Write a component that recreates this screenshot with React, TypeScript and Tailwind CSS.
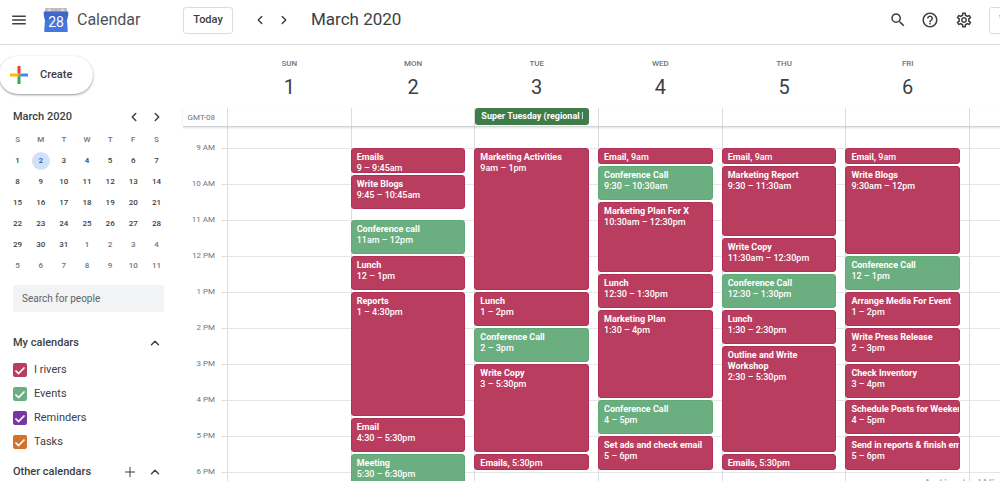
import {
  ChevronLeft,
  ChevronRight,
  ChevronUp,
  Plus,
} from "lucide-react";
import {
  MdHelpOutline,
  MdMenu,
  MdOutlineSettings,
  MdSearch,
} from "react-icons/md";

type Tone = "rose" | "green";

interface CalEvent {
  title: string;
  time: string;
  start: number;
  end: number;
  tone?: Tone;
  wrap?: boolean;
}

interface Day {
  name: string;
  date: number;
  allDay?: string;
  events: CalEvent[];
}

const FIRST_HOUR = 9;

const toneClass: Record<Tone, string> = {
  rose: "bg-[#b93d5e] border-[#b23057]",
  green: "bg-[#6bae7f] border-[#62a978]",
};

const days: Day[] = [
  { name: "SUN", date: 1, events: [] },
  {
    name: "MON",
    date: 2,
    events: [
      { title: "Emails", time: "9 – 9:45am", start: 9, end: 9.75 },
      { title: "Write Blogs", time: "9:45 – 10:45am", start: 9.75, end: 10.75 },
      { title: "Conference call", time: "11am – 12pm", start: 11, end: 12, tone: "green" },
      { title: "Lunch", time: "12 – 1pm", start: 12, end: 13 },
      { title: "Reports", time: "1 – 4:30pm", start: 13, end: 16.5 },
      { title: "Email", time: "4:30 – 5:30pm", start: 16.5, end: 17.5 },
      { title: "Meeting", time: "5:30 – 6:30pm", start: 17.5, end: 18.5, tone: "green" },
    ],
  },
  {
    name: "TUE",
    date: 3,
    allDay: "Super Tuesday (regional holiday)",
    events: [
      { title: "Marketing Activities", time: "9am – 1pm", start: 9, end: 13 },
      { title: "Lunch", time: "1 – 2pm", start: 13, end: 14 },
      { title: "Conference Call", time: "2 – 3pm", start: 14, end: 15, tone: "green" },
      { title: "Write Copy", time: "3 – 5:30pm", start: 15, end: 17.5 },
      { title: "Emails", time: "5:30pm", start: 17.5, end: 18 },
    ],
  },
  {
    name: "WED",
    date: 4,
    events: [
      { title: "Email", time: "9am", start: 9, end: 9.5 },
      { title: "Conference Call", time: "9:30 – 10:30am", start: 9.5, end: 10.5, tone: "green" },
      { title: "Marketing Plan For X", time: "10:30am – 12:30pm", start: 10.5, end: 12.5 },
      { title: "Lunch", time: "12:30 – 1:30pm", start: 12.5, end: 13.5 },
      { title: "Marketing Plan", time: "1:30 – 4pm", start: 13.5, end: 16 },
      { title: "Conference Call", time: "4 – 5pm", start: 16, end: 17, tone: "green" },
      { title: "Set ads and check email", time: "5 – 6pm", start: 17, end: 18 },
    ],
  },
  {
    name: "THU",
    date: 5,
    events: [
      { title: "Email", time: "9am", start: 9, end: 9.5 },
      { title: "Marketing Report", time: "9:30 – 11:30am", start: 9.5, end: 11.5 },
      { title: "Write Copy", time: "11:30am – 12:30pm", start: 11.5, end: 12.5 },
      { title: "Conference Call", time: "12:30 – 1:30pm", start: 12.5, end: 13.5, tone: "green" },
      { title: "Lunch", time: "1:30 – 2:30pm", start: 13.5, end: 14.5 },
      { title: "Outline and Write Workshop", time: "2:30 – 5:30pm", start: 14.5, end: 17.5, wrap: true },
      { title: "Emails", time: "5:30pm", start: 17.5, end: 18 },
    ],
  },
  {
    name: "FRI",
    date: 6,
    events: [
      { title: "Email", time: "9am", start: 9, end: 9.5 },
      { title: "Write Blogs", time: "9:30am – 12pm", start: 9.5, end: 12 },
      { title: "Conference Call", time: "12 – 1pm", start: 12, end: 13, tone: "green" },
      { title: "Arrange Media For Event", time: "1 – 2pm", start: 13, end: 14 },
      { title: "Write Press Release", time: "2 – 3pm", start: 14, end: 15 },
      { title: "Check Inventory", time: "3 – 4pm", start: 15, end: 16 },
      { title: "Schedule Posts for Weekend", time: "4 – 5pm", start: 16, end: 17 },
      { title: "Send in reports & finish emails", time: "5 – 6pm", start: 17, end: 18 },
    ],
  },
];

const hours = ["9 AM", "10 AM", "11 AM", "12 PM", "1 PM", "2 PM", "3 PM", "4 PM", "5 PM", "6 PM"];

// Six full weeks starting on Sunday, March 1st
const monthDays = Array.from({ length: 42 }, (_, i) => (i < 31 ? i + 1 : i - 30));

const calendars = [
  { name: "I rivers", color: "bg-[#b93d5e]" },
  { name: "Events", color: "bg-[#6bae7f]" },
  { name: "Reminders", color: "bg-[#7a35a0]" },
  { name: "Tasks", color: "bg-[#d2722b]" },
];

function Logo() {
  return (
    <svg viewBox="0 0 26 26" className="h-[26px] w-[26px]" aria-hidden="true">
      <path d="M3 1h20a1 1 0 0 1 1 1v4H2V2a1 1 0 0 1 1-1z" fill="#bdbdbd" />
      <circle cx="6.500" cy="3" r="1" fill="#f5f5f5" />
      <circle cx="19.500" cy="3" r="1" fill="#f5f5f5" />
      <path d="M1.500 4.500h23a.7.7 0 0 1 .7.7v3L24 13.500H2L.8 8.200v-3a.7.7 0 0 1 .7-.7z" fill="#3d67c9" />
      <path d="M2 13h22l.8 11a1 1 0 0 1-1 1H2.200a1 1 0 0 1-1-1z" fill="#4478df" />
      <text
        x="13"
        y="20"
        textAnchor="middle"
        fontSize="14"
        fill="#fff"
        fontFamily="Roboto, sans-serif"
      >
        28
      </text>
    </svg>
  );
}

function Header() {
  return (
    <header className="flex h-[45px] shrink-0 items-center overflow-hidden border-b border-[#dadce0] pb-1 pl-[10px] text-[#3c4043]">
      <button aria-label="Main menu">
        <MdMenu className="h-[18px] w-[18px]" />
      </button>
      <div className="ml-[15px] flex w-[140px] shrink-0 items-center gap-2">
        <Logo />
        <span className="text-[16px] text-[#4d5156]">Calendar</span>
      </div>
      <button className="h-[27px] w-[50px] shrink-0 rounded-[3px] border border-[#dadce0] text-[11px] font-medium">
        Today
      </button>
      <button aria-label="Previous week" className="ml-5">
        <ChevronLeft className="h-3.5 w-3.5" strokeWidth={2.5} />
      </button>
      <button aria-label="Next week" className="ml-2.5">
        <ChevronRight className="h-3.5 w-3.5" strokeWidth={2.5} />
      </button>
      <h1 className="ml-5 flex-1 text-[17px]">March 2020</h1>
      <div className="flex shrink-0 items-center gap-3.5">
        <button aria-label="Search">
          <MdSearch className="h-[18px] w-[18px]" />
        </button>
        <button aria-label="Support">
          <MdHelpOutline className="h-[18px] w-[18px]" />
        </button>
        <button aria-label="Settings" className="ml-0.5">
          <MdOutlineSettings className="h-[18px] w-[18px]" />
        </button>
      </div>
      <button className="-mr-[39px] ml-4 h-[27px] w-[50px] shrink-0 rounded-[3px] border border-[#dadce0] text-[12px] font-medium">
        Week
      </button>
    </header>
  );
}

function MiniCalendar() {
  return (
    <section>
      <div className="mt-[15px] flex h-4 items-center pl-[13px] pr-[19px]">
        <h2 className="flex-1 text-[11px] font-medium">March 2020</h2>
        <button aria-label="Previous month">
          <ChevronLeft className="h-3.5 w-3.5" strokeWidth={2.5} />
        </button>
        <button aria-label="Next month" className="ml-[9px]">
          <ChevronRight className="h-3.5 w-3.5" strokeWidth={2.5} />
        </button>
      </div>
      <table className="mt-1 ml-1.5 w-[162px] table-fixed text-center text-[8px]">
        <thead>
          <tr className="h-[21px] text-[#70757a]">
            {["S", "M", "T", "W", "T", "F", "S"].map((d, i) => (
              <th key={i} className="p-0 font-medium">
                {d}
              </th>
            ))}
          </tr>
        </thead>
        <tbody>
          {[0, 1, 2, 3, 4, 5].map((week) => (
            <tr key={week} className="h-[21px]">
              {monthDays.slice(week * 7, week * 7 + 7).map((d, i) => {
                const index = week * 7 + i;
                return (
                  <td
                    key={index}
                    className={index > 30 ? "p-0 font-medium text-[#70757a]" : "p-0 font-medium"}
                  >
                    {index === 1 ? (
                      <span className="mx-auto flex h-[18px] w-[18px] items-center justify-center rounded-full bg-[#d2e0f8] text-[#185abc]">
                        {d}
                      </span>
                    ) : (
                      d
                    )}
                  </td>
                );
              })}
            </tr>
          ))}
        </tbody>
      </table>
    </section>
  );
}

function Sidebar() {
  return (
    <aside className="w-[183px] shrink-0 pt-[11px] text-[#3c4043]">
      <button className="-ml-px flex h-[38px] w-[94px] items-center gap-3 rounded-full pl-[11px] text-[11px] font-medium shadow-[0_1px_2px_rgba(60,64,67,0.4),0_1px_3px_rgba(60,64,67,0.2)]">
        <svg viewBox="0 0 18 18" className="h-[18px] w-[18px]" aria-hidden="true">
          <path d="M7.500 0h3v10.500h-3z" fill="#ea4335" />
          <path d="M7.500 10.500h3V18h-3z" fill="#34a853" />
          <path d="M10.500 7.500H18v3h-7.500z" fill="#4285f4" />
          <path d="M0 7.500h10.500l-3 3H0z" fill="#fbbc04" />
        </svg>
        Create
      </button>
      <MiniCalendar />
      <input
        aria-label="Search for people"
        placeholder="Search for people"
        className="mt-[9px] ml-[13px] block h-[27px] w-[151px] rounded-[3px] bg-[#f1f3f4] px-[9px] text-[10px] placeholder:text-[#5f6368]"
      />
      <div className="mt-[23px] flex h-4 items-center pl-[13px] pr-[21px]">
        <h2 className="flex-1 text-[11px] font-medium">My calendars</h2>
        <button aria-label="Collapse my calendars">
          <ChevronUp className="h-3.5 w-3.5" strokeWidth={2.5} />
        </button>
      </div>
      <ul className="mt-[7px] pl-[13px]">
        {calendars.map((cal) => (
          <li key={cal.name} className="h-6">
            <label className="flex h-full items-center gap-[7px] text-[11px]">
              <span className="grid">
                <input
                  type="checkbox"
                  defaultChecked
                  className={`col-start-1 row-start-1 h-3.5 w-3.5 appearance-none rounded-[2px] ${cal.color}`}
                />
                <svg
                  viewBox="0 0 14 14"
                  className="pointer-events-none col-start-1 row-start-1 h-3.5 w-3.5"
                  aria-hidden="true"
                >
                  <path d="M2.500 7.500l3 3 6-6" fill="none" stroke="#fff" strokeWidth="1.600" />
                </svg>
              </span>
              {cal.name}
            </label>
          </li>
        ))}
      </ul>
      <div className="mt-[10px] flex h-4 items-center pl-[13px] pr-[21px]">
        <h2 className="flex-1 text-[11px] font-medium">Other calendars</h2>
        <button aria-label="Add other calendars" className="mr-2.5">
          <Plus className="h-4 w-4" strokeWidth={1.5} />
        </button>
        <button aria-label="Collapse other calendars">
          <ChevronUp className="h-3.5 w-3.5" strokeWidth={2.5} />
        </button>
      </div>
    </aside>
  );
}

function EventBlock({ event }: { event: CalEvent }) {
  const quarters = (event.end - event.start) * 4;
  const row = (event.start - FIRST_HOUR) * 4 + 1;
  const short = quarters <= 2;

  return (
    <div
      className={`mb-0.5 -ml-px mr-[9px] overflow-hidden rounded-[3px] border pl-[5px] pt-[3px] text-[9px] leading-[11px] font-medium text-white ${toneClass[event.tone ?? "rose"]}`}
      style={{ gridRow: `${row} / span ${quarters}` }}
    >
      {short ? (
        <p className="whitespace-nowrap">
          <span className="font-bold">{event.title},</span> {event.time}
        </p>
      ) : (
        <>
          <p className={event.wrap ? "font-bold" : "whitespace-nowrap font-bold"}>
            {event.title}
          </p>
          <p className="whitespace-nowrap">{event.time}</p>
        </>
      )}
    </div>
  );
}

function Week() {
  return (
    <main className="flex min-w-0 flex-1 flex-col">
      <div className="flex h-[63px] shrink-0">
        <div className="w-11 shrink-0" />
        <div className="grid flex-1 grid-cols-[repeat(6,4fr)_1fr] text-center">
          {days.map((day) => (
            <div key={day.name} className="border-l border-transparent pt-3">
              <p className="text-[8px] leading-[14px] font-medium text-[#70757a]">{day.name}</p>
              <p className="mt-[3px] text-[20px] leading-[26px] text-[#3c4043]">{day.date}</p>
            </div>
          ))}
        </div>
      </div>

      <div className="z-10 flex h-[19px] shrink-0 border-b border-[#d0d2d5] shadow-[0_1px_2px_rgba(0,0,0,0.12)]">
        <div className="w-11 shrink-0 pr-3 text-right text-[8px] leading-[19px] text-[#70757a]">
          GMT-08
        </div>
        <div className="grid min-w-0 flex-1 grid-cols-[repeat(6,4fr)_1fr]">
          {days.map((day) => (
            <div key={day.name} className="min-w-0 border-l border-[#dadce0]">
              {day.allDay && (
                <div className="mr-[9px] h-[17px] rounded-[3px] bg-[#3f7c48] px-1.5 text-[9px] leading-[17px] font-bold text-white">
                  <p className="overflow-hidden whitespace-nowrap">{day.allDay}</p>
                </div>
              )}
            </div>
          ))}
          <div className="border-l border-[#dadce0]" />
        </div>
      </div>

      <div className="flex min-h-0 flex-1 overflow-hidden">
        <div className="w-11 shrink-0 pt-[3px] text-[8px] text-[#70757a]">
          {hours.map((hour) => (
            <div key={hour} className="flex h-9 items-center">
              <span className="flex-1 text-right">{hour}</span>
              <span className="ml-1.5 h-px w-1.5 bg-[#e0e2e5]" />
            </div>
          ))}
        </div>
        <div className="grid flex-1">
          <div className="col-start-1 row-start-1 pt-[21px]">
            {hours.map((hour) => (
              <div key={hour} className="h-9 border-t border-[#e4e6e9]" />
            ))}
          </div>
          <div className="col-start-1 row-start-1 grid grid-cols-[repeat(6,4fr)_1fr]">
            {days.map((day) => (
              <div
                key={day.name}
                className="grid auto-rows-[9px] grid-cols-[minmax(0,1fr)] border-l border-[#dadce0] pt-[21px]"
              >
                {day.events.map((event) => (
                  <EventBlock key={event.title + event.start} event={event} />
                ))}
              </div>
            ))}
            <div className="border-l border-[#dadce0]" />
          </div>
        </div>
      </div>
    </main>
  );
}

export default function App() {
  return (
    <div className="relative flex h-screen flex-col overflow-hidden bg-white font-[Roboto,sans-serif] text-[#3c4043]">
      <Header />
      <div className="flex min-h-0 flex-1">
        <Sidebar />
        <Week />
      </div>
      <p className="absolute -right-[38px] -bottom-[13px] z-20 font-['Open_Sans',sans-serif] text-[14px] leading-5 whitespace-nowrap text-[#a5a5a5]">
        Activate Windows
      </p>
    </div>
  );
}
